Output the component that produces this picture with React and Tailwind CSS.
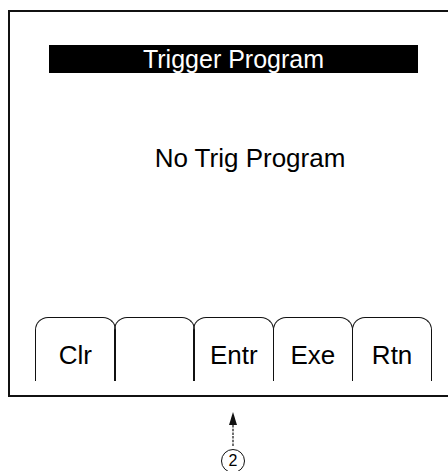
import React from "react";

const tabs = ["Clr", "", "Entr", "Exe", "Rtn"];

const SoftKey = ({ label, first }) => (
    <div
        className={`w-[80.7px] h-[64px] shrink-0 border-[1.5px] border-b-0 border-[#111] rounded-t-[13px] flex justify-center pt-[22px] ${first ? "" : "-ml-[1.5px]"}`}
    >
        <span className="text-[26px] leading-[30px] text-black">{label}</span>
    </div>
);

export default function App() {
    return (
        <div
            className="w-[448px] h-[471px] overflow-hidden bg-white"
            style={{ fontFamily: '"Liberation Sans", Arial, sans-serif' }}
        >
            {/* display frame, its right edge runs past the picture */}
            <div className="ml-[8px] mt-[10px] w-[460px] h-[387px] border-l-2 border-t-2 border-b-[2.5px] border-r-0 border-[#111] flex flex-col">
                <div className="mt-[33px] ml-[39px] w-[369px] h-[28px] bg-black text-white text-[25px] leading-[28px] text-center">
                    Trigger Program
                </div>

                <div className="mt-[70px] w-[438px] pl-[42px] text-center text-[26px] leading-[30px] text-black">
                    No Trig Program
                </div>

                <div className="mt-[144px] ml-[25px] flex">
                    {tabs.map((t, i) => (
                        <SoftKey key={i} label={t} first={i === 0} />
                    ))}
                </div>
            </div>

            {/* callout pointer */}
            <div className="ml-[227px] mt-[15px] w-[12px] h-[37px]">
                <svg width="12" height="37" viewBox="0 0 12 37">
                    <path d="M6 0 L10 13 L2 13 Z" fill="#111" />
                    <line x1="6" y1="13" x2="6" y2="35" stroke="#111" strokeWidth="1.2" strokeDasharray="2.5 1.2" />
                </svg>
            </div>
            <div className="ml-[221px] w-[24px] h-[24px] rounded-full border-[1.5px] border-[#111] flex items-center justify-center">
                <span className="text-[16px] leading-none text-black">2</span>
            </div>
        </div>
    );
}
